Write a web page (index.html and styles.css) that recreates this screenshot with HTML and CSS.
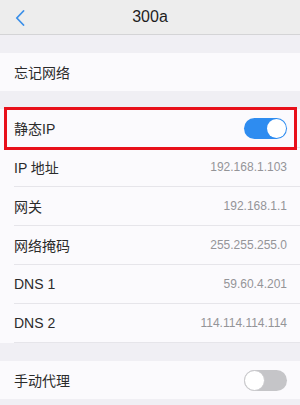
FILE: index.html
```html
<!DOCTYPE html>
<html>
<head>
<meta charset="utf-8">
<link rel="stylesheet" href="styles.css">
</head>
<body>

<div class="navBar">
    <div class="navBack">
        <svg width="10" height="16" viewBox="0 0 10 16"><path d="M8.5 1 L1.8 8 L8.5 15" fill="none" stroke="#3b8fe8" stroke-width="1.8" stroke-linecap="round" stroke-linejoin="round"/></svg>
    </div>
    <div class="navTitle">300a</div>
</div>

<div class="group">
    <div class="row"><span class="label">忘记网络</span></div>
</div>

<div class="group highlighted">
    <div class="row"><span class="label">静态IP</span><div class="switch on"><div class="knob"></div></div></div>
    <div class="row"><span class="label">IP 地址</span><span class="value">192.168.1.103</span></div>
    <div class="row"><span class="label">网关</span><span class="value">192.168.1.1</span></div>
    <div class="row"><span class="label">网络掩码</span><span class="value">255.255.255.0</span></div>
    <div class="row"><span class="label">DNS 1</span><span class="value">59.60.4.201</span></div>
    <div class="row"><span class="label">DNS 2</span><span class="value">114.114.114.114</span></div>
    <div class="redBox"></div>
</div>

<div class="group">
    <div class="row"><span class="label">手动代理</span><div class="switch"><div class="knob"></div></div></div>
</div>

</body>
</html>
```

FILE: styles.css
```css
body {
    margin: 0;
    background-color: #f0eff4;
    font-family: "Liberation Sans", "Noto Sans CJK SC", sans-serif;
    color: #2b2b2b;
}

.navBar {
    height: 34px;
    border-bottom: 1px solid #d4d4d6;
    background-color: #ededed;
    display: flex;
    align-items: center;
    justify-content: center;
    position: relative;
}

.navBack {
    position: absolute;
    left: 15px;
    top: 10px;
}

.navTitle {
    font-size: 16px;
    color: #1e1e1e;
}

.group {
    margin-top: 18px;
    background-color: #fbfafd;
    position: relative;
}

.row {
    height: 38px;
    margin-left: 14px;
    padding-right: 13px;
    display: flex;
    align-items: center;
    justify-content: space-between;
    border-bottom: 1px solid #e6e5ea;
}

.row:last-of-type {
    border-bottom: none;
}

.label {
    font-size: 14px;
}

.value {
    font-size: 12px;
    color: #949498;
}

.switch {
    width: 43px;
    height: 21px;
    border-radius: 11px;
    background-color: #c5c5c8;
    position: relative;
}

.switch .knob {
    position: absolute;
    top: 0;
    left: 0;
    width: 19px;
    height: 19px;
    border-radius: 50%;
    background: white;
    border: 1px solid #c8c8cb;
}

.switch.on {
    background-color: #2e8cf0;
}

.switch.on .knob {
    left: auto;
    right: 1px;
    top: 1px;
    width: 19px;
    height: 19px;
    border: none;
}

.redBox {
    position: absolute;
    left: 4px;
    top: -2px;
    width: 287px;
    height: 37px;
    border: 3px solid #e8101a;
}
```
